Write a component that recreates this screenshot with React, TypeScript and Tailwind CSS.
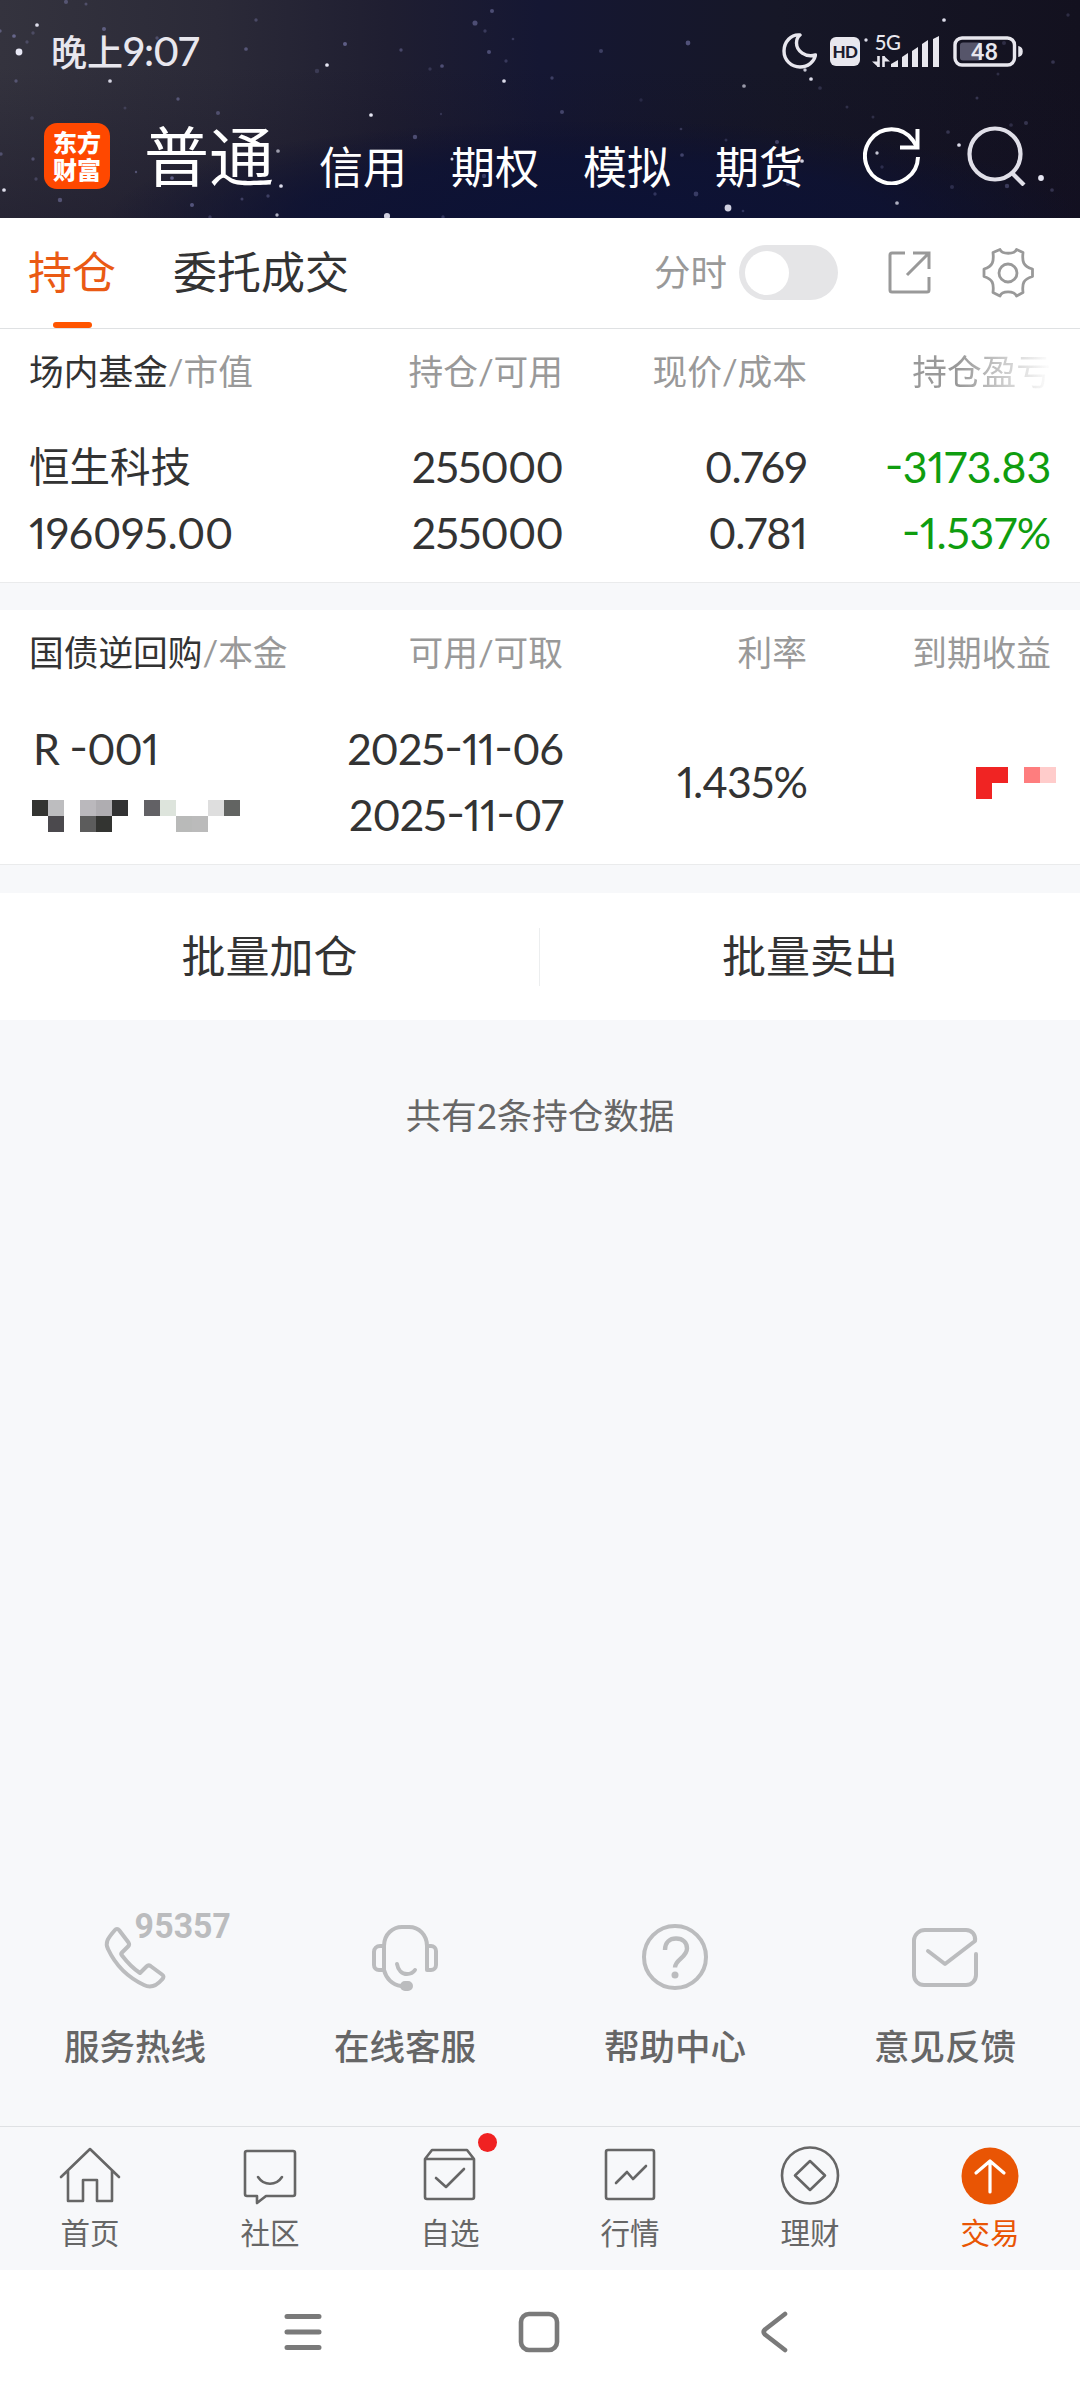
import type { ReactNode } from "react";

type Star = [x: number, y: number, r: number, o: number];

const stars: Star[] = [
  [19, 52, 4, 0.95], [37, 25, 2.2, 0.9], [14, 36, 2.2, 0.5], [16, 81, 2, 0.35], [0, 31, 2, 0.4], [27, 42, 2, 0.25],
  [33, 33, 2, 0.25], [104, 29, 2.4, 0.45], [66, 2, 2.4, 0.35], [86, 4, 1.8, 0.3], [110, 81, 2.2, 0.85], [157, 38, 2, 0.3],
  [178, 99, 2, 0.4], [218, 113, 2.4, 0.35], [125, 108, 1.8, 0.2], [32, 118, 2.2, 0.2], [256, 20, 2, 0.3], [246, 49, 2.2, 0.4],
  [345, 44, 2.4, 0.5], [327, 65, 2.2, 0.95], [317, 71, 2.6, 0.2], [401, 50, 2, 0.35], [442, 66, 2.2, 0.4], [430, 69, 2, 0.2],
  [475, 23, 3, 0.4], [485, 31, 2, 0.25], [492, 11, 2.4, 0.4], [489, 52, 2.4, 0.4], [504, 81, 2.2, 0.9], [506, 61, 2, 0.25],
  [513, 39, 1.6, 0.25], [371, 115, 2.2, 0.95], [415, 137, 2.6, 0.4], [441, 114, 1.4, 0.2], [452, 159, 1.8, 0.9], [278, 151, 2.2, 0.6],
  [281, 186, 2.2, 0.9], [268, 196, 2, 0.3], [242, 199, 1.8, 0.3], [192, 205, 2.4, 0.45], [277, 215, 2, 0.7], [387, 216, 3.6, 0.85],
  [60, 200, 2.6, 0.4], [4, 190, 2.2, 0.9], [1, 154, 2, 0.35], [33, 159, 2, 0.35], [36, 179, 2, 0.25], [136, 172, 1.4, 0.4],
  [210, 217, 2, 0.25], [443, 217, 2, 0.25], [172, 178, 2.2, 0.5], [484, 176, 2.6, 0.3], [688, 43, 2.8, 0.45], [601, 51, 2.4, 0.3],
  [552, 78, 2, 0.3], [562, 112, 2.4, 0.35], [744, 86, 2.2, 0.6], [811, 79, 2.2, 0.9], [805, 70, 2, 0.8], [820, 88, 2.2, 0.2],
  [944, 20, 2.2, 0.9], [866, 40, 2, 0.9], [1068, 15, 2, 0.2], [1053, 62, 2.2, 0.25], [1004, 43, 2.4, 0.2], [998, 74, 1.8, 0.2],
  [977, 98, 1.8, 0.25], [847, 107, 1.8, 0.2], [873, 117, 1.8, 0.2], [948, 132, 2.2, 0.25], [959, 145, 2.2, 0.9], [1011, 125, 2.2, 0.2],
  [1026, 123, 2.4, 0.25], [877, 153, 2, 0.8], [882, 167, 2, 0.2], [1041, 178, 3.4, 0.95], [1007, 186, 2.6, 0.3], [1052, 190, 2.2, 0.25],
  [952, 187, 2.4, 0.2], [897, 203, 2.2, 0.7], [728, 208, 4, 0.85], [743, 211, 1.6, 0.25], [682, 155, 2.2, 0.35], [777, 142, 2.4, 0.35],
  [681, 129, 1.6, 0.25], [726, 140, 1.8, 0.2], [696, 194, 2.8, 0.3], [655, 194, 2, 0.25], [641, 100, 2, 0.15], [802, 161, 2.2, 0.85],
  [788, 184, 2.4, 0.25],
];

function StarField() {
  return (
    <svg className="absolute inset-0 h-full w-full" viewBox="0 0 1080 218">
      <defs>
        <linearGradient id="sky" x1="0" y1="0" x2="1" y2="0">
          <stop offset="0" stopColor="#34333e" />
          <stop offset="0.2" stopColor="#2b2a38" />
          <stop offset="0.36" stopColor="#1f1e31" />
          <stop offset="0.5" stopColor="#151733" />
          <stop offset="0.72" stopColor="#161727" />
          <stop offset="1" stopColor="#13111f" />
        </linearGradient>
        <radialGradient id="blue" cx="0.55" cy="1" r="0.45">
          <stop offset="0" stopColor="#0c1236" />
          <stop offset="0.6" stopColor="#0d1234" stopOpacity="0.8" />
          <stop offset="1" stopColor="#0d1030" stopOpacity="0" />
        </radialGradient>
        <linearGradient id="dusk" x1="0" y1="0" x2="0" y2="1">
          <stop offset="0.3" stopColor="#120f24" stopOpacity="0" />
          <stop offset="1" stopColor="#120f24" stopOpacity="0.4" />
        </linearGradient>
      </defs>
      <rect width="1080" height="218" fill="url(#sky)" />
      <rect width="1080" height="218" fill="url(#dusk)" />
      <rect width="1080" height="218" fill="url(#blue)" />
      {stars.map(([x, y, r, o]) => (
        <circle key={`${x}-${y}`} cx={x} cy={y} r={r * 0.85} opacity={o} fill={o < 0.6 ? "#9a9ad8" : "#f2f2ff"} />
      ))}
    </svg>
  );
}

function StatusBar() {
  return (
    <div className="flex h-[102px] items-center pl-[51px] pr-[57px] text-[#e8e7ee]">
      <span className="mr-auto text-[36px] font-medium leading-none">晚上<span className="text-[40px] tracking-[-1px]">9:07</span></span>
      <svg className="mr-[13px] h-9 w-[35px]" viewBox="0 0 35 36" fill="none" stroke="currentColor" strokeWidth="3.4" strokeLinejoin="round">
        <path d="M18 2C9 1 2 9 2 18c0 9 7 16 16 16 8 0 14-5 15.500-12-10 3-19-4-19-12 0-3 1-6 3.500-8z" />
      </svg>
      <span className="mr-[12px] flex h-[29px] w-[30px] items-center justify-center rounded-[6px] bg-[#e8e7ee] text-[17px] font-black leading-none tracking-tight text-[#1c1c30]">
        HD
      </span>
      <svg className="mr-[14px] h-9 w-[67px] overflow-visible" viewBox="0 0 67 36">
        <text x="3" y="17" fontSize="21" fontWeight="500" textLength="26" lengthAdjust="spacingAndGlyphs" className="font-['Lato',sans-serif]" fill="currentColor">5G</text>
        <path d="M6.500 23v11M11.500 34V23" stroke="currentColor" strokeWidth="2.600" />
        <path d="M0 28.500h6v5.500zM18 28.500h-6v-5.500z" fill="currentColor" />
        <path d="M19 31l7-4v7h-7zM30 24l6-4v14h-6zM40 18l6-4v20h-6zM50 11l6-4v27h-6zM61 6l6-3v31h-6z" fill="currentColor" />
      </svg>
      <svg className="h-[31px] w-[70px]" viewBox="0 0 70 31">
        <rect x="2" y="2" width="59.500" height="27" rx="7" fill="none" stroke="currentColor" strokeWidth="3.400" />
        <rect x="7" y="6.500" width="22" height="18" rx="3" fill="#56556a" />
        <path d="M66 11c4 1 4 8 0 9z" fill="currentColor" stroke="currentColor" strokeWidth="1.500" />
        <text x="31.500" y="24" textAnchor="middle" fontSize="24" fontWeight="500" className="font-['Roboto',sans-serif]" fill="currentColor">48</text>
      </svg>
    </div>
  );
}

function AppHeader() {
  return (
    <header className="relative h-[218px] overflow-hidden bg-[#15152c]">
      <StarField />
      <div className="relative">
        <StatusBar />
        <div className="flex h-[108px] items-center pl-11 text-white">
          <div className="flex h-[66px] w-[66px] flex-col items-center justify-center rounded-[13px] bg-[#ff4800] text-[24px] font-black leading-[27px]">
            <span>东方</span>
            <span>财富</span>
          </div>
          <span className="ml-[34px] text-[65px] leading-none">普通</span>
          <nav className="ml-[45px] mt-[21px] flex gap-[44px] text-[44px] leading-none">
            <span>信用</span>
            <span>期权</span>
            <span>模拟</span>
            <span>期货</span>
          </nav>
          <svg className="ml-[60px] h-[58px] w-[58px]" viewBox="0 0 58 58" fill="none" stroke="currentColor" strokeWidth="4">
            <path d="M55 30A26.500 27 0 1 1 50 13.500L54 20" />
            <path d="M54.500 2v18.500H37" />
          </svg>
          <svg className="ml-[46px] h-[60px] w-[60px] text-[#e0dfe8]" viewBox="0 0 60 60" fill="none" stroke="currentColor" strokeWidth="4.200">
            <circle cx="28" cy="28" r="25.500" />
            <path d="M45 47l12 12" />
          </svg>
        </div>
      </div>
    </header>
  );
}

function TabBar() {
  return (
    <div className="flex h-[111px] border-b border-[#dfe1e3] pl-[28px] text-[44px] leading-[109px] text-[#333]">
      <div className="relative text-[#ea5a14]">
        持仓
        <span className="absolute bottom-0 left-[25px] h-[6px] w-[39px] rounded-full bg-[#ff5500]" />
      </div>
      <span className="ml-[57px]">委托成交</span>
      <div className="ml-auto flex h-[109px] items-center pr-[46px] text-[#999]">
        <span className="text-[36.5px] leading-none">分时</span>
        <span className="ml-[12px] flex h-[55px] w-[99px] items-center rounded-full bg-[#e5e5e7] pl-[6px]">
          <span className="h-11 w-11 rounded-full bg-white" />
        </span>
        <svg className="ml-[50px] h-[43px] w-[43px]" viewBox="0 0 43 43" fill="none" stroke="currentColor" strokeWidth="3">
          <path d="M17 2H4a2 2 0 0 0-2 2v35a2 2 0 0 0 2 2h35a2 2 0 0 0 2-2V26M25 2h16v16M40 3L19 24" />
        </svg>
        <svg className="ml-[51px] h-[50px] w-[52px]" viewBox="-1 -0.5 52 50" fill="none" stroke="currentColor" strokeWidth="2.800" strokeLinejoin="round">
          <path d="M17 1C19 6 31.500 6 33.500 1L40 4C39 13 40 18 49.500 20.500V28C40 31 39 35 40 44L33.500 47.500C31 42 19 42 17 47.500L10 44C11 35 10 31 1 28V20.500C10 18 11 13 10 4Z" />
          <circle cx="25" cy="24.500" r="9" />
        </svg>
      </div>
    </div>
  );
}

function TableHead({ title, sub, children }: { title: string; sub: string; children: ReactNode }) {
  return (
    <div className="grid h-[86px] grid-cols-[290px_244px_244px_244px] items-center text-right text-[34.7px] leading-none text-[#999]">
      <span className="whitespace-nowrap text-left">
        <span className="text-[#333]">{title}</span>/{sub}
      </span>
      {children}
    </div>
  );
}

// Hyphens sit at half digit height and run a little wide
function Num({ value }: { value: string }) {
  return (
    <>
      {value.split(/(-)/).map((part, i) =>
        part === "-" ? (
          <span key={i} className="inline-block w-[18px] origin-center -translate-y-[3px] scale-x-120 text-center">
            -
          </span>
        ) : (
          part
        ),
      )}
    </>
  );
}

// 16px cells, "" leaves the cell blank
function Mosaic({ rows }: { rows: string[][] }) {
  return (
    <div className="flex flex-col">
      {rows.map((row, i) => (
        <div key={i} className="flex">
          {row.map((cell, j) => (
            <span key={j} className={`h-4 w-4 ${cell}`} />
          ))}
        </div>
      ))}
    </div>
  );
}

const principal = [
  ["bg-[#333431]", "bg-[#bdbdbf]", "", "bg-[#bab8bc]", "bg-[#afadb1]", "bg-[#323233]", "", "bg-[#626165]", "bg-[#dde4dc]", "", "", "bg-[#dedede]", "bg-[#626462]"],
  ["", "bg-[#4b494d]", "", "bg-[#5c5c5c]", "bg-[#333431]", "", "", "", "", "bg-[#b9bab9]", "bg-[#bbbbbb]", "", ""],
];

const earnings = [
  ["bg-[#f02423]", "bg-[#f02423]", "", "bg-[#fe7d7e]", "bg-[#ffcccb]"],
  ["bg-[#f02423]", "", "", "", ""],
];

function FundTable() {
  return (
    <section className="h-[254px] border-b border-[#eaebec] bg-white px-[29px]">
      <TableHead title="场内基金" sub="市值">
        <span>持仓/可用</span>
        <span>现价/成本</span>
        <span className="bg-linear-to-r from-[#999] from-62% to-transparent to-100% bg-clip-text pl-[104px] text-transparent">持仓盈亏</span>
      </TableHead>
      <div className="mt-[19px] grid grid-cols-[290px_244px_244px_244px] text-right text-[43px] leading-[66px] tracking-[-0.8px] text-[#333]">
        <span className="text-left text-[40.5px] tracking-normal">恒生科技</span>
        <span>255000</span>
        <span>0.769</span>
        <span className="tracking-[-0.2px] text-[#0f9d0f]"><Num value="-3173.83" /></span>
        <span className="text-left tracking-[-0.2px]">196095.00</span>
        <span>255000</span>
        <span>0.781</span>
        <span className="tracking-[-0.2px] text-[#0f9d0f]"><Num value="-1.537%" /></span>
      </div>
    </section>
  );
}

function RepoTable() {
  return (
    <section className="h-[255px] border-b border-[#eaebec] bg-white px-[29px]">
      <TableHead title="国债逆回购" sub="本金">
        <span>可用/可取</span>
        <span>利率</span>
        <span>到期收益</span>
      </TableHead>
      <div className="mt-[20px] grid grid-cols-[290px_244px_244px_249px] text-right text-[43px] leading-[66px] tracking-[-0.9px] text-[#333]">
        <div className="text-left">
          <div className="pl-[4px]">R <Num value="-001" /></div>
          <div className="pl-[3px] pt-[18px]">
            <Mosaic rows={principal} />
          </div>
        </div>
        <div className="-ml-6 whitespace-nowrap">
          <div><Num value="2025-11-06" /></div>
          <div><Num value="2025-11-07" /></div>
        </div>
        <span className="self-center">1.435%</span>
        <div className="self-center justify-self-end pt-[2px]">
          <Mosaic rows={earnings} />
        </div>
      </div>
    </section>
  );
}

const serviceIcon = "h-[68px] w-[68px]";

const services = [
  {
    label: "服务热线",
    icon: (
      <svg className="h-[84px] w-[130px] overflow-visible" viewBox="0 0 130 84" fill="none" stroke="#bbbcbe" strokeWidth="4" strokeLinejoin="round">
        <path d="M45 23C46 21.500 48 21.500 49 23L58.500 35.500C59.500 37 59.500 38 58 39.500L52 45.500C51 46.500 51 47.500 52 48.500C57 55 63 61.500 70 66L76.500 59.500C78 58 79 58 80.500 59L92 67.500C94 69 94 70.500 92 72.500C86 79.500 80 81 74 78C57 70 45 57 38 42C35 36 37 32 45 23Z" />
        <text x="64.500" y="30.500" fontSize="35" fontWeight="700" textLength="96" lengthAdjust="spacingAndGlyphs" fill="#bbbcbe" stroke="none" className="font-['Roboto',sans-serif]">95357</text>
      </svg>
    ),
  },
  {
    label: "在线客服",
    icon: (
      <svg className={serviceIcon} viewBox="0 0 68 68" fill="none" stroke="#bbbcbe" strokeWidth="4" strokeLinecap="round" strokeLinejoin="round">
        <path d="M13 23H9a6 6 0 0 0-6 6v13a5 5 0 0 0 5 5h5V23C13 11 22 4 31 4h7c10 0 18 8 18 19v24h4a5 5 0 0 0 5-5V28a5 5 0 0 0-5-5h-4M13 47c2 8 8 15 17 16" />
        <path d="M26 41c1 6 5 10 10 10 4 0 6-1 8-4" />
        <rect x="31" y="60" width="9" height="6" rx="3" fill="#bbbcbe" />
      </svg>
    ),
  },
  {
    label: "帮助中心",
    icon: (
      <svg className={serviceIcon} viewBox="0 0 68 68" fill="none" stroke="#bbbcbe" strokeWidth="4">
        <circle cx="34" cy="34" r="31" />
        <path d="M24 27c0-8 5-11.500 11-11.500 7 0 11 4 11 10 0 9-12 11-12 19" strokeWidth="4.400" />
        <circle cx="34" cy="52" r="3.500" fill="#bbbcbe" stroke="none" />
      </svg>
    ),
  },
  {
    label: "意见反馈",
    icon: (
      <svg className={serviceIcon} viewBox="0 0 68 68" fill="none" stroke="#bbbcbe" strokeWidth="4" strokeLinecap="round" strokeLinejoin="round">
        <path d="M17 28l17 13 30-23c1-6-3-11-9-11H14A11 11 0 0 0 3 17v35a10 10 0 0 0 10 10h42a10 10 0 0 0 10-10V31" />
      </svg>
    ),
  },
];

function ServiceRow() {
  return (
    <div className="grid h-[226px] grid-cols-4">
      {services.map((s) => (
        <div key={s.label} className="flex flex-col items-center text-[#666]">
          <div className="flex h-[91px] items-end">{s.icon}</div>
          <span className="mt-[38px] text-[35.5px] font-medium leading-none">{s.label}</span>
        </div>
      ))}
    </div>
  );
}

const navItems = [
  { label: "首页", icon: <path d="M2 31L31 3l29 28M9 25v30h15V34h14v21h15V25" /> },
  { label: "社区", icon: <><path d="M8 5h46a2 2 0 0 1 2 2v41a2 2 0 0 1-2 2H27l-9 7v-7H8a2 2 0 0 1-2-2V7a2 2 0 0 1 2-2z" /><path d="M19 31c6 9 18 9 24 0" /></> },
  { label: "自选", dot: true, icon: <><path d="M6 13l7-9h35l7 9v38a2 2 0 0 1-2 2H8a2 2 0 0 1-2-2zM6 13h49" /><path d="M17 32l10 9 18-18" /></> },
  { label: "行情", icon: <><rect x="7" y="4" width="48" height="49" rx="2" /><path d="M17 37l11-11 6 7 13-13" /></> },
  { label: "理财", icon: <><circle cx="31" cy="29.500" r="28" /><path d="M31 15l15 14.500L31 44 16 29.500z" /></> },
  { label: "交易", active: true, icon: <><circle cx="31" cy="30" r="28.500" fill="#e95504" stroke="none" /><path d="M31 46V16M17 27l14-12 14 12" stroke="white" strokeWidth="3.200" /></> },
];

function BottomNav() {
  return (
    <nav className="grid h-[144px] grid-cols-6 border-t border-[#dfe1e4] bg-[#f7f8fa]">
      {navItems.map((item) => (
        <div key={item.label} className={item.active ? "flex flex-col items-center text-[#e95504]" : "flex flex-col items-center text-[#666]"}>
          <div className="relative mt-[19px]">
            <svg className="h-[60px] w-[62px]" viewBox="0 0 62 60" fill="none" stroke="currentColor" strokeWidth="2.600" strokeLinejoin="round" strokeLinecap="round">
              {item.icon}
            </svg>
            {item.dot && <span className="absolute -right-[16px] -top-[13px] h-[19px] w-[19px] rounded-full bg-[#f02222]" />}
          </div>
          <span className="mt-[12px] text-[29.5px] leading-none">{item.label}</span>
        </div>
      ))}
    </nav>
  );
}

function SystemNav() {
  return (
    <div className="flex h-[130px] items-center bg-white pb-[6px] pl-[283px]">
      <svg className="h-[42px] w-10" viewBox="0 0 40 42" stroke="#7a7a7a" strokeWidth="5" strokeLinecap="round">
        <path d="M4 5.500h32M4 21h32M4 36.500h32" />
      </svg>
      <svg className="ml-[195px] h-[42px] w-[42px]" viewBox="0 0 42 42" fill="none" stroke="#7a7a7a" strokeWidth="4.600">
        <rect x="3" y="3" width="36" height="36" rx="8" />
      </svg>
      <svg className="ml-[199px] h-[42px] w-8" viewBox="0 0 32 42" fill="none" stroke="#7a7a7a" strokeWidth="4.600" strokeLinecap="round" strokeLinejoin="round">
        <path d="M26 3L6 18.500q-2.500 2.500 0 5L26 39" />
      </svg>
    </div>
  );
}

export default function App() {
  return (
    <div className="flex h-[2400px] w-[1080px] flex-col overflow-hidden bg-[#f7f8fa] font-['Lato','Noto_Sans_CJK_SC',sans-serif] proportional-nums">
      <AppHeader />
      <div className="bg-white">
        <TabBar />
      </div>
      <FundTable />
      <div className="mt-[27px]">
        <RepoTable />
      </div>
      <div className="mt-[28px] flex h-[127px] items-center bg-white text-center text-[44px] leading-none text-[#333]">
        <span className="w-[539px] pb-[2px]">批量加仓</span>
        <span className="h-[58px] w-px bg-[#eceeef]" />
        <span className="flex-1 pb-[2px]">批量卖出</span>
      </div>
      <p className="mt-[78px] text-center text-[35.5px] leading-none text-[#666]">共有2条持仓数据</p>
      <div className="mt-auto">
        <ServiceRow />
        <BottomNav />
        <SystemNav />
      </div>
    </div>
  );
}
